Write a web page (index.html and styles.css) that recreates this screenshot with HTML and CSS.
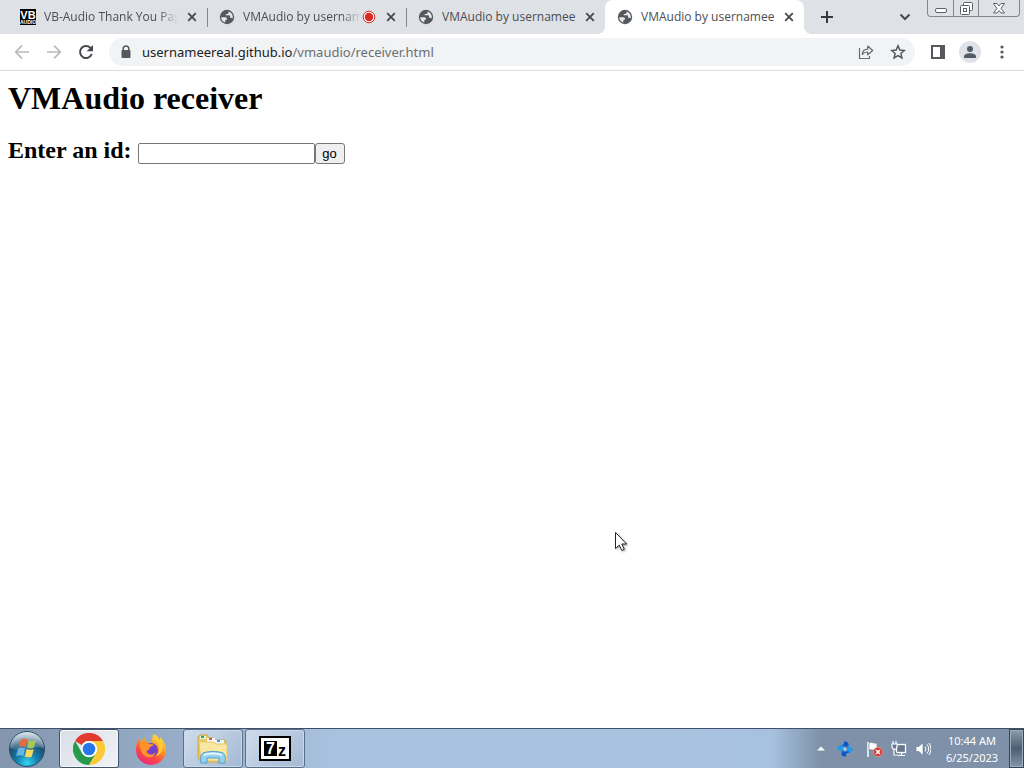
FILE: index.html
```html
<!DOCTYPE html>
<html lang="en">
<head>
<meta charset="utf-8">
<meta name="viewport" content="width=device-width, initial-scale=1">
<title>VMAudio by usernamee</title>
<link rel="stylesheet" href="styles.css">
</head>
<body>
<svg class="defs" aria-hidden="true">
  <symbol id="globe" viewBox="0 0 16 16">
    <circle cx="8" cy="8" r="7.2" fill="#55585c"/>
    <path d="M2.200 8.200H6.200c1.200 0 1.800.8 1.800 1.600 0 .9-.7 1.400-1.700 1.400v2.200C3.800 12.700 2.100 10.600 2.200 8.200Z M9.600 2.400C12 3.100 13.700 5.200 13.800 7.600c0 .7-.1 1.300-.3 1.900-.4-.5-.9-.8-1.600-.8h-.8V7.200c0-.6-.4-.9-.9-.9H6.800V4.900h1.400c.8 0 1.400-.6 1.400-1.400Z" fill="#e6e8ec"/>
  </symbol>
  <symbol id="close" viewBox="0 0 16 16">
    <path d="M4.200 4.200 11.800 11.800 M11.800 4.200 4.200 11.800" stroke="#45494d" stroke-width="1.8" fill="none"/>
  </symbol>
</svg>

<header class="browser">
  <div class="strip">
    <nav class="tabs" aria-label="Tabs">
      <div class="tab">
        <svg class="icon" viewBox="0 0 16 16"><rect width="16" height="16" fill="#000"/><text x="8" y="10" class="vb-big">VB</text><text x="8" y="15" class="vb-small">AUDIO</text></svg>
        <span class="title fade">VB-Audio Thank You Page</span>
        <button class="close" aria-label="Close tab"><svg class="icon"><use href="#close"/></svg></button>
      </div>
      <div class="tab divided">
        <svg class="icon"><use href="#globe"/></svg>
        <span class="title fade">VMAudio by usernamee</span>
        <svg class="icon" viewBox="0 0 16 16"><circle cx="8" cy="8" r="5.8" fill="#fff" stroke="#d93025"/><circle cx="8" cy="8" r="4.2" fill="#d92b20"/></svg>
        <button class="close" aria-label="Close tab"><svg class="icon"><use href="#close"/></svg></button>
      </div>
      <div class="tab divided">
        <svg class="icon"><use href="#globe"/></svg>
        <span class="title">VMAudio by usernamee</span>
        <button class="close" aria-label="Close tab"><svg class="icon"><use href="#close"/></svg></button>
      </div>
      <div class="tab active">
        <svg class="icon"><use href="#globe"/></svg>
        <span class="title">VMAudio by usernamee</span>
        <button class="close" aria-label="Close tab"><svg class="icon"><use href="#close"/></svg></button>
      </div>
    </nav>
    <button class="new-tab" aria-label="New tab"><svg class="icon" viewBox="0 0 16 16"><path d="M8 2v12M2 8h12" stroke="#35383c" stroke-width="2"/></svg></button>
    <button class="tab-search" aria-label="Search tabs"><svg class="icon" viewBox="0 0 16 16"><path d="M3.500 5.500 8 10l4.500-4.500" stroke="#45494d" stroke-width="2" fill="none"/></svg></button>
    <div class="window-buttons">
      <button class="win" aria-label="Minimize"><svg width="14" height="14" viewBox="0 0 14 14"><rect x="1.500" y="7.500" width="11" height="4" rx="1.500" fill="#fff" stroke="#5d6167"/></svg></button>
      <button class="win" aria-label="Restore"><svg width="14" height="14" viewBox="0 0 14 14"><g fill="#fff" stroke="#5d6167"><rect x="4.500" y="1.500" width="9" height="8" rx="1"/><rect x="1.500" y="4.500" width="9" height="9" rx="1"/><rect x="4.500" y="7.500" width="3" height="3"/></g></svg></button>
      <button class="win wide" aria-label="Close"><svg width="14" height="14" viewBox="0 0 14 14"><path d="M1.500 2.500h3.500l2 2.500 2-2.500h3.500L9 7.500l3.500 4.500H9L7 9.500 5 12H1.500L5 7.500Z" fill="#fff" stroke="#5d6167"/></svg></button>
    </div>
  </div>
  <div class="toolbar">
    <button class="tool" aria-label="Back"><svg width="16" height="16" viewBox="0 0 16 16"><path d="M15 8H2M8 1.700 1.700 8 8 14.300" stroke="#b8babd" stroke-width="1.700" fill="none"/></svg></button>
    <button class="tool" aria-label="Forward"><svg width="16" height="16" viewBox="0 0 16 16"><path d="M1 8h13M8 1.700 14.300 8 8 14.300" stroke="#b8babd" stroke-width="1.700" fill="none"/></svg></button>
    <button class="tool" aria-label="Reload"><svg width="16" height="16" viewBox="0 0 16 16"><path d="M13.700 10A6 6 0 1 1 12.300 3.800L13 4.600" stroke="#45494d" stroke-width="2" fill="none"/><path d="M15 1v6.300H8.700Z" fill="#45494d"/></svg></button>
    <div class="omnibox">
      <svg class="icon" viewBox="0 0 16 16"><path d="M5.200 7V4.800a2.800 2.800 0 0 1 5.600 0V7" stroke="#55585c" stroke-width="1.500" fill="none"/><rect x="3.500" y="6" width="9" height="8" rx="1" fill="#55585c"/></svg>
      <a class="url" href="#"><span class="host">usernameereal.github.io</span>/vmaudio/receiver.html</a>
      <button class="tool" aria-label="Share"><svg width="16" height="16" viewBox="0 0 16 16"><path d="M1.500 4v10.500h10V12M4.300 10.500C4.500 7 6.500 5.300 9.700 5.200V2l5 4.500-5 4.300V8C7.300 7.900 5.700 8.600 4.300 10.500Z" stroke="#686c70" stroke-width="1.200" fill="none" stroke-linejoin="round"/></svg></button>
      <button class="tool" aria-label="Bookmark"><svg width="16" height="16" viewBox="0 0 16 16"><path d="M8 1.800 9.800 6.100l4.500.4-3.400 3 1 4.400L8 11.600l-3.900 2.300 1-4.400-3.400-3 4.500-.4Z" stroke="#55585c" stroke-width="1.500" fill="none"/></svg></button>
    </div>
    <button class="tool" aria-label="Side panel"><svg width="16" height="16" viewBox="0 0 16 16"><path d="M1 1h14v14H1Z" fill="#55585c"/><path d="M3 3h7v10H3Z" fill="#fff"/></svg></button>
    <button class="tool" aria-label="Profile"><svg width="22" height="22" viewBox="0 0 22 22"><circle cx="11" cy="11" r="11" fill="#dfe2e6"/><circle cx="11" cy="8" r="3" fill="#4f5b68"/><path d="M5 17v-1.500C5 13 9 12.300 11 12.300s6 .7 6 3.200V17Z" fill="#4f5b68"/></svg></button>
    <button class="tool" aria-label="Menu"><svg width="16" height="16" viewBox="0 0 16 16"><g fill="#55585c"><circle cx="8" cy="3" r="1.600"/><circle cx="8" cy="8" r="1.600"/><circle cx="8" cy="13" r="1.600"/></g></svg></button>
  </div>
</header>

<main class="page">
  <h1>VMAudio receiver</h1>
  <h2><label for="id-box">Enter an id:</label> <input id="id-box" class="id-box" type="text"><button class="go">go</button></h2>
</main>

<svg class="cursor" width="14" height="22" viewBox="0 0 14 22" aria-hidden="true"><path d="M1.500 1.500v16l3.700-3.400 2.600 5.400 2.500-1.200-2.500-5.300h4.900Z" fill="#fff" stroke="#222"/></svg>

<footer class="taskbar">
  <button class="start" aria-label="Start">
    <svg width="38" height="38" viewBox="0 0 38 38">
      <defs>
        <radialGradient id="orb" cx="50%" cy="90%" r="85%"><stop offset="0" stop-color="#35d6f2"/><stop offset=".35" stop-color="#1580ae"/><stop offset=".7" stop-color="#1d4f74"/><stop offset="1" stop-color="#8ba5b9"/></radialGradient>
        <linearGradient id="shine" x2="0" y2="1"><stop offset="0" stop-color="#fff" stop-opacity=".65"/><stop offset="1" stop-color="#fff" stop-opacity=".12"/></linearGradient>
      </defs>
      <circle cx="19" cy="19" r="17.500" fill="url(#orb)" stroke="#254c68"/>
      <path d="M2 18a17 16 0 0 1 34 0C27 15 12 23 2 18Z" fill="url(#shine)"/>
      <path d="M13 9.500c2-1.500 4.500-1 6.500 0l-1.800 7.500c-2.500-1-4.700-1.200-7.200.3Z" fill="#e8693d"/>
      <path d="M20.700 10.200c2.500 1 4.700 1 7.300-.2l-2 7.500c-2.500 1.300-4.800 1-7 .1Z" fill="#a7c854"/>
      <path d="M10 18.700c2.500-1.500 5-1 7.200-.2L15.300 26c-2.300-1-4.600-1.200-7.300.2Z" fill="#68b5e5"/>
      <path d="M18.600 19c2.300 1 4.600 1 7.200-.1l-2 7.600c-2.500 1.200-4.700 1-7.100 0Z" fill="#fbd75a"/>
    </svg>
  </button>
  <div class="apps">
    <button class="app current" aria-label="Google Chrome">
      <svg width="32" height="32" viewBox="0 0 32 32"><path d="M2.100 8A16 16 0 0 1 29.900 8H16a8 8 0 0 0-7 4.200Z" fill="#e13b2f"/><path d="M29.900 8A16 16 0 0 1 16 32l7-12a8 8 0 0 0 0-8l-7-4Z" fill="#fcca35"/><path d="M2.100 8A16 16 0 0 0 16 32l7-12a8 8 0 0 1-14 0Z" fill="#279b4b"/><circle cx="16" cy="16" r="8" fill="#fff"/><circle cx="16" cy="16" r="6.300" fill="#2976e8"/></svg>
    </button>
    <button class="app" aria-label="Firefox">
      <svg width="32" height="32" viewBox="0 0 32 32">
        <defs><linearGradient id="fox" x1=".85" y1="0" x2=".3" y2="1"><stop offset="0" stop-color="#fff044"/><stop offset=".4" stop-color="#ff9b25"/><stop offset=".7" stop-color="#fb4b43"/><stop offset="1" stop-color="#ed257b"/></linearGradient></defs>
        <path d="M19 1c4 2 5 5 6 6V4c4 4 6 8 6 13a15 15 0 0 1-30 0C1 12 2 9 4 6l2 3c1-2 2-4 4-5-1 3 0 4 2 5l5 1c0-4 0-6 2-9Z" fill="url(#fox)"/>
        <circle cx="16" cy="17" r="7" fill="#7340ce"/>
        <path d="M5 9c4-1 7 0 9 2l5 .5c-1 2-4 2-4.500 3.500 0 2-2 2-3 3 1 4 6 5 9 1-1 5-5 6-8 5-5-1-8-7-7.500-15Z" fill="#ff9229"/>
        <path d="M19 1c-1 4 1 6 3 8 3 4 3 10-1 14 5-1 8-7 6-12-1-4-5-5-8-10Z" fill="#ffcb34"/>
      </svg>
    </button>
    <button class="app open" aria-label="File Explorer">
      <svg width="34" height="32" viewBox="0 0 34 32">
        <path d="M2 25V4l2-2h7l2 3h5l1 2h10l1 3v18l-3 1H5Z" fill="#e8c967" stroke="#cba746"/>
        <path d="M4 3h6v3H4Z" fill="#eaf2e7"/><path d="M5 3h3v2H5Z" fill="#36a648"/><path d="M11 5h8v4h-8Z" fill="#fff"/><path d="M13 5h3v2h-3Z" fill="#db5133"/><path d="M19 7h9v4h-9Z" fill="#eef6fa"/><path d="M21 7h3v2h-3Z" fill="#4a97d4"/>
        <path d="M3 9h15l2 2h11v17H5Z" fill="#f7e7a0" stroke="#e1c66f"/>
        <path d="M5 30c-1-5 0-9 2-10 5-2 15-2 20 0 2 1 3 5 2 10h-6v-5H11v5Z" fill="#95d0ee" stroke="#4e9fcf"/>
        <path d="M8 22c5-2 13-2 18 0" fill="none" stroke="#e4f7ff" stroke-width="2"/>
      </svg>
    </button>
    <button class="app open" aria-label="7-Zip">
      <svg width="32" height="25" viewBox="0 0 32 25"><rect x="1" y="1" width="30" height="23" fill="#fff" stroke="#000" stroke-width="2"/><rect x="5" y="5" width="13" height="15" fill="#000"/><text x="11.500" y="18" class="seven">7</text><text x="23" y="20" class="zed">z</text></svg>
    </button>
  </div>
  <div class="tray">
    <button class="tray-icon" aria-label="Show hidden icons"><svg width="8" height="5" viewBox="0 0 8 5"><path d="M0 4.500 4 .5l4 4Z" fill="#fff"/></svg></button>
    <button class="tray-icon spaced" aria-label="Sync"><svg width="16" height="16" viewBox="0 0 16 16"><defs><path id="blade" d="M7 .5c3.500-.5 5.500 2 4.500 5L10 7.500C10 5.500 8.500 5 6.500 5.500 5 6 4 5.500 3.500 4.500 6 4.500 7.500 3 7 .5Z"/></defs><use href="#blade" fill="#0a55c8"/><use href="#blade" fill="#1b9bf2" transform="rotate(90 8 8)"/><use href="#blade" fill="#0a55c8" transform="rotate(180 8 8)"/><use href="#blade" fill="#1b9bf2" transform="rotate(270 8 8)"/><circle cx="8" cy="8" r="1.500" fill="#a8d4f2"/></svg></button>
    <button class="tray-icon" aria-label="Action Center"><svg width="18" height="16" viewBox="0 0 18 16"><path d="M2 1v15" stroke="#fff" stroke-width="1.500"/><path d="M3 2c3-2 4 1 8 0v7c-3 1-5-1-8 0Z" fill="#fff" stroke="#56677b" stroke-width=".5"/><circle cx="12" cy="11" r="4.700" fill="#d7372e" stroke="#efb8b3" stroke-width=".6"/><path d="m10 9 4 4m0-4-4 4" stroke="#fff" stroke-width="1.500"/></svg></button>
    <button class="tray-icon" aria-label="Network"><svg width="16" height="16" viewBox="0 0 16 16"><rect x="5.500" y="3.500" width="9" height="8" fill="#66798e" stroke="#fff" stroke-width="1.300"/><path d="M10.500 12v2M7 14.500h7M3 8v6h4M1 3h5v3L5 8H2L1 6ZM2 3V0M5 3V0" stroke="#fff" fill="#64768c" stroke-width="1.200"/></svg></button>
    <button class="tray-icon" aria-label="Volume"><svg width="16" height="16" viewBox="0 0 16 16"><path d="M1 5.500h3L8 1.500v13l-4-4H1Z" fill="#fff" stroke="#53667d" stroke-width=".5"/><path d="M10 5.500q2 2.500 0 5M12 3.500q3.500 4.500 0 9M14 2q4 6 0 12" fill="none" stroke="#fff"/></svg></button>
    <div class="clock"><span>10:44 AM</span><span>6/25/2023</span></div>
    <button class="show-desktop" aria-label="Show desktop"></button>
  </div>
</footer>
</body>
</html>
```
FILE: styles.css
```css
* { box-sizing: border-box; }

body {
  display: flex;
  flex-direction: column;
  min-height: 100vh;
  margin: 0;
  background: #fff;
  color: #000;
}

button {
  margin: 0;
  padding: 0;
  border: 0;
  background: none;
}

svg { display: block; }
.defs { position: absolute; width: 0; height: 0; }
.icon { flex: none; width: 16px; height: 16px; }

.browser {
  border-bottom: 1px solid #dadce0;
  font-family: "Noto Sans", "Open Sans", sans-serif;
}

/* Tab strip */
.strip {
  display: flex;
  height: 34px;
  padding: 0 4px 0 8px;
  background: #dee1e6;
}

.tabs {
  display: flex;
  flex: 0 1 796px;
  min-width: 0;
}

.tab {
  position: relative;
  display: flex;
  flex: 1 1 0;
  align-items: center;
  min-width: 0;
  padding: 0 7px 0 12px;
}

.divided::before {
  content: "";
  position: absolute;
  top: 8px;
  left: 0;
  width: 1px;
  height: 19px;
  background: #85898e;
}

.title {
  flex: 1;
  min-width: 0;
  margin-left: 8px;
  overflow: hidden;
  color: #4a4d51;
  font-family: "Open Sans", sans-serif;
  font-size: 12px;
  line-height: 18px;
  white-space: nowrap;
}

.fade {
  -webkit-mask-image: linear-gradient(to left, transparent, #000 20px);
  mask-image: linear-gradient(to left, transparent, #000 20px);
}

.close { margin-left: 6px; }

.active {
  border-radius: 8px 8px 0 0;
  background: #fff;
}

.active::before,
.active::after {
  content: "";
  position: absolute;
  bottom: 0;
  width: 8px;
  height: 8px;
}

.active::before {
  right: 100%;
  background: radial-gradient(circle at 0 0, transparent 8px, #fff 8px);
}

.active::after {
  left: 100%;
  background: radial-gradient(circle at 100% 0, transparent 8px, #fff 8px);
}

.new-tab { padding: 0 15px; }
.tab-search { margin-left: auto; padding: 0 14px 0 0; }

.window-buttons {
  display: flex;
  height: 17px;
  border: 1px solid #85898e;
  border-top: 0;
  border-radius: 0 0 4px 4px;
}

.win {
  display: flex;
  justify-content: center;
  align-items: center;
  width: 25px;
}

.win + .win { border-left: 1px solid #85898e; }
.win.wide { width: 41px; }

/* Toolbar */
.toolbar {
  display: flex;
  align-items: center;
  height: 36px;
  padding: 0 6px;
  background: #fff;
}

.tool {
  display: flex;
  flex: none;
  justify-content: center;
  align-items: center;
  width: 32px;
  height: 28px;
}

.omnibox {
  display: flex;
  flex: 1;
  align-items: center;
  height: 28px;
  min-width: 0;
  margin: 0 7px;
  padding: 0 1px 0 9px;
  border-radius: 14px;
  background: #f1f3f4;
}

.url {
  flex: 1;
  min-width: 0;
  margin-left: 8px;
  overflow: hidden;
  color: #6b6f73;
  font-size: 13px;
  line-height: 20px;
  text-decoration: none;
  white-space: nowrap;
}

.host { color: #202124; }

/* Document */
.page {
  flex: 1;
  padding: 8px;
  font-family: "Liberation Serif", serif;
}

h1 { margin: 0 0 20px; font-size: 32px; line-height: 38px; }
h2 { margin: 0; font-size: 24px; }

.id-box {
  width: 177px;
  height: 21px;
  border: 1px solid #767676;
  border-radius: 2px;
  font: 13px "Liberation Sans", sans-serif;
}

.go {
  width: 30px;
  height: 21px;
  border: 1px solid #767676;
  border-radius: 3px;
  background: #efefef;
  color: #000;
  font: 13px "Liberation Sans", sans-serif;
}

.cursor {
  position: absolute;
  top: 531px;
  left: 614px;
  filter: drop-shadow(1px 1px 1px #0005);
}

/* Taskbar */
.taskbar {
  display: flex;
  height: 40px;
  border-top: 1px solid #3f5068;
  background: linear-gradient(to right, #8496ae, #a9c2df 340px, #a6c1e0);
}

.start { padding: 0 9px 0 8px; }
.apps { display: flex; gap: 2px; padding-left: 4px; }

.app {
  display: flex;
  justify-content: center;
  align-items: center;
  width: 60px;
  border: 1px solid transparent;
  border-radius: 3px;
}

.open {
  border-color: #596e89;
  background: linear-gradient(135deg, #d1dceb, #a3b9d4);
  box-shadow: inset 0 0 0 1px #cad8e9;
}

.current {
  border-color: #43546a;
  background: linear-gradient(135deg, #d9dfe7, #f0f3f6);
  box-shadow: inset 0 0 0 1px #f5f8fb;
}

.tray {
  display: flex;
  align-items: center;
  margin-left: auto;
  padding-left: 38px;
  background: linear-gradient(to right, #a6c1e000, #7e91a9 50px);
}

.tray-icon {
  display: flex;
  justify-content: center;
  align-items: center;
  width: 24px;
  height: 39px;
}

.tray-icon.spaced { margin-right: 6px; }

.clock {
  display: flex;
  flex-direction: column;
  width: 74px;
  color: #fff;
  font: 11px/17px "Noto Sans", "Open Sans", sans-serif;
  text-align: center;
}

.show-desktop {
  width: 15px;
  height: 39px;
  border: 1px solid #35465a;
  background: linear-gradient(#8f9dac, #4b5e74 50%, #8595a8);
  box-shadow: inset 0 0 0 1px #9eacbb;
}

/* Lettering inside icons */
.vb-big,
.vb-small,
.seven,
.zed {
  font-family: "Liberation Sans", sans-serif;
  font-weight: bold;
  text-anchor: middle;
}

.vb-big { fill: #fff; font-size: 11px; }
.vb-small { fill: #fff; font-size: 5px; }
.seven { fill: #fff; font-size: 16px; }
.zed { fill: #000; font-size: 16px; }
```
